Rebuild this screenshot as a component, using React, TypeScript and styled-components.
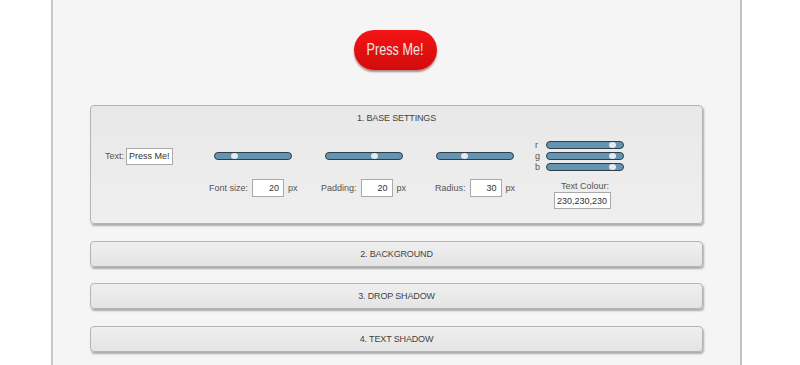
import React from "react";
import styled, { createGlobalStyle } from "styled-components";

const GlobalStyle = createGlobalStyle`
  html, body { margin: 0; padding: 0; background: #ffffff; }
  body { font-family: "Liberation Sans", Arial, sans-serif; color: #444; }
`;

const Page = styled.div`
  margin-left: 51px;
  width: 687px;
  min-height: 365px;
  background: #f5f5f5;
  border-left: 2px solid #c8c8c8;
  border-right: 2px solid #c4c4c4;
`;

const Preview = styled.div`
  height: 105px;
  display: flex;
  justify-content: center;
  align-items: flex-start;
  padding-right: 2px;
`;

const PressButton = styled.button`
  margin-top: 30px;
  width: 83px;
  height: 40px;
  border: none;
  border-radius: 20px;
  background: linear-gradient(#f41414, #d10c0c);
  color: rgb(230, 230, 230);
  font-family: "Liberation Sans", Arial, sans-serif;
  font-size: 16px;
  box-shadow: 0 2px 2px rgba(90, 0, 0, 0.45);
  cursor: pointer;
  padding: 0;
  display: flex;
  align-items: center;
  justify-content: center;
`;

const Condensed = styled.span`
  display: inline-block;
  transform: scaleX(0.79);
  white-space: nowrap;
`;

const Accordion = styled.div`
  display: flex;
  flex-direction: column;
  gap: 16.5px;
  padding: 0 37px;
`;

const Panel = styled.div<{ $open?: boolean }>`
  border: 1px solid #b4b4b4;
  border-radius: 4px;
  background: ${(p) =>
    p.$open ? "linear-gradient(#e8e8e8, #efefef)" : "linear-gradient(#efefef, #e4e4e4)"};
  box-shadow: 1px 2px 2px rgba(0, 0, 0, 0.3);
`;

const PanelHeader = styled.div`
  height: 24px;
  display: flex;
  align-items: center;
  justify-content: center;
  font-size: 9px;
  letter-spacing: -0.15px;
  text-transform: uppercase;
  color: #444;
`;

const PanelBody = styled.div`
  display: grid;
  grid-template-columns: 104px 112px 114px 100px 89px;
  padding: 6px 0 14px 14px;
`;

const Column = styled.div<{ $align?: string }>`
  display: flex;
  flex-direction: column;
  align-items: ${(p) => p.$align || "center"};
  width: max-content;
`;

const TopArea = styled.div`
  height: 40px;
  display: flex;
  align-items: center;
`;

const FieldRow = styled.div`
  margin-top: 3px;
  height: 18px;
  display: flex;
  align-items: center;
  gap: 4px;
  font-size: 9px;
  color: #555;
`;

const Label = styled.span`
  font-size: 9px;
  color: #555;
`;

const TextInput = styled.input`
  box-sizing: border-box;
  width: 47px;
  height: 17px;
  border: 1px solid #a9a9a9;
  background: #fff;
  font-family: inherit;
  font-size: 9px;
  color: #333;
  padding: 0 2px;
  margin-left: 2px;
`;

const NumInput = styled.input`
  box-sizing: border-box;
  width: 32px;
  height: 18px;
  border: 1px solid #a9a9a9;
  background: #fff;
  font-family: inherit;
  font-size: 9px;
  color: #333;
  text-align: right;
  padding: 0 4px;
`;

const Track = styled.div`
  position: relative;
  box-sizing: border-box;
  width: 78px;
  height: 8px;
  border: 1px solid #2f3f49;
  border-radius: 4px;
  background: #6494b1;
`;

const Thumb = styled.div`
  position: absolute;
  top: 0;
  width: 7px;
  height: 6px;
  margin-left: -3px;
  border-radius: 50%;
  background: #e6e9ee;
`;

const RgbBlock = styled.div`
  display: flex;
  flex-direction: column;
  gap: 3px;
`;

const RgbRow = styled.div`
  display: flex;
  align-items: center;
  height: 8px;
`;

const RgbLabel = styled.span`
  width: 11px;
  font-size: 9px;
  color: #555;
`;

const ColourPart = styled.div`
  margin-left: 11px;
  width: 78px;
  display: flex;
  flex-direction: column;
  align-items: center;
`;

const ColourLabel = styled.div`
  margin-top: 4px;
  height: 12px;
  line-height: 12px;
  font-size: 9px;
  color: #555;
`;

const ColourInput = styled.input`
  box-sizing: border-box;
  width: 57px;
  height: 17px;
  margin-left: -6px;
  border: 1px solid #a9a9a9;
  background: #fff;
  font-family: inherit;
  font-size: 9px;
  color: #333;
  text-align: center;
  padding: 0;
`;

const Slider = ({ pct }: { pct: number }) => (
  <Track>
    <Thumb style={{ left: `${pct}%` }} />
  </Track>
);

const NumField = ({ label, value, pct }: { label: string; value: number; pct: number }) => (
  <Column>
    <TopArea>
      <Slider pct={pct} />
    </TopArea>
    <FieldRow>
      <span>{label}</span>
      <NumInput readOnly value={value} />
      <span>px</span>
    </FieldRow>
  </Column>
);

export default function App() {
  return (
    <>
      <GlobalStyle />
      <Page>
        <Preview>
          <PressButton>
            <Condensed>Press Me!</Condensed>
          </PressButton>
        </Preview>
        <Accordion>
          <Panel $open>
            <PanelHeader>1. Base Settings</PanelHeader>
            <PanelBody>
              <Column $align="flex-start">
                <TopArea>
                  <Label>Text:</Label>
                  <TextInput readOnly value="Press Me!" />
                </TopArea>
              </Column>
              <NumField label="Font size:" value={20} pct={24} />
              <NumField label="Padding:" value={20} pct={64} />
              <NumField label="Radius:" value={30} pct={35} />
              <Column $align="flex-start">
                <TopArea>
                  <RgbBlock>
                    {["r", "g", "b"].map((c) => (
                      <RgbRow key={c}>
                        <RgbLabel>{c}</RgbLabel>
                        <Slider pct={86} />
                      </RgbRow>
                    ))}
                  </RgbBlock>
                </TopArea>
                <ColourPart>
                  <ColourLabel>Text Colour:</ColourLabel>
                  <ColourInput readOnly value="230,230,230" />
                </ColourPart>
              </Column>
            </PanelBody>
          </Panel>
          <Panel>
            <PanelHeader>2. Background</PanelHeader>
          </Panel>
          <Panel>
            <PanelHeader>3. Drop Shadow</PanelHeader>
          </Panel>
          <Panel>
            <PanelHeader>4. Text Shadow</PanelHeader>
          </Panel>
        </Accordion>
      </Page>
    </>
  );
}
